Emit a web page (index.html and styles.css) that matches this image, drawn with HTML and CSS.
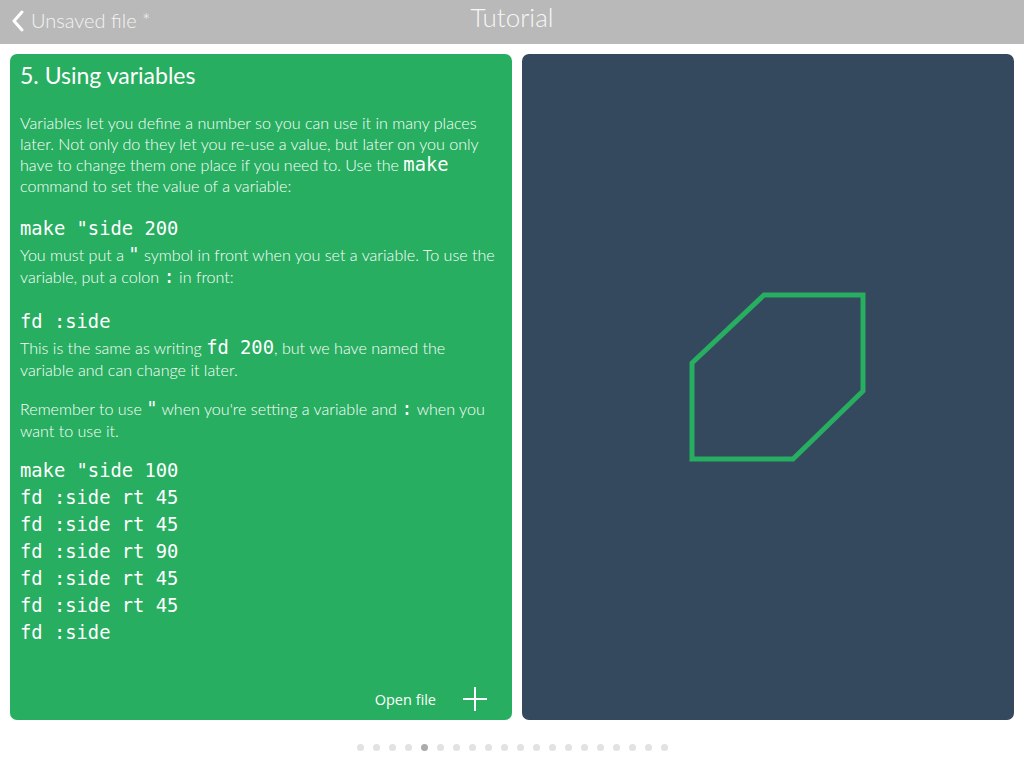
FILE: index.html
```html
<!DOCTYPE html>
<html>
<head>
<meta charset="utf-8">
<link rel="stylesheet" href="styles.css">
</head>
<body>
<header class="topbar">
  <a class="back">
    <svg class="chev" width="14" height="22" viewBox="0 0 14 22"><path d="M11 2 L3 11 L11 20" fill="none" stroke="#fff" stroke-width="3" stroke-linecap="round" stroke-linejoin="round"/></svg>
    <span>Unsaved file *</span>
  </a>
  <div class="title">Tutorial</div>
</header>
<main class="main">
  <section class="card lesson">
    <h1>5. Using variables</h1>
    <p class="p1">Variables let you define a number so you can use it in many places later. Not only do they let you re-use a value, but later on you only have to change them one place if you need to. Use the <code>make</code> command to set the value of a variable:</p>
    <pre class="code first">make "side 200</pre>
    <p class="desc">You must put a <code>"</code> symbol in front when you set a variable. To use the variable, put a colon <code>:</code> in front:</p>
    <pre class="code second">fd :side</pre>
    <p class="desc">This is the same as writing <code>fd 200</code>, but we have named the variable and can change it later.</p>
    <p class="p2">Remember to use <code>"</code> when you're setting a variable and <code>:</code> when you want to use it.</p>
    <pre class="code block">make "side 100
fd :side rt 45
fd :side rt 45
fd :side rt 90
fd :side rt 45
fd :side rt 45
fd :side</pre>
    <div class="spacer"></div>
    <div class="actions">
      <span class="open">Open file</span>
      <svg class="plus" width="26" height="26" viewBox="0 0 26 26"><path d="M13 1 V25 M1 13 H25" stroke="#fff" stroke-width="2"/></svg>
    </div>
  </section>
  <section class="card canvas">
    <svg class="drawing" width="492" height="666" viewBox="0 0 492 666">
      <polygon points="170,309 242,241 341,241 341,337 271,405 170,405" fill="none" stroke="#27ae60" stroke-width="5" stroke-linejoin="miter"/>
    </svg>
  </section>
</main>
<nav class="dots">
  <span class="dot"></span><span class="dot"></span><span class="dot"></span><span class="dot"></span><span class="dot active"></span><span class="dot"></span><span class="dot"></span><span class="dot"></span><span class="dot"></span><span class="dot"></span><span class="dot"></span><span class="dot"></span><span class="dot"></span><span class="dot"></span><span class="dot"></span><span class="dot"></span><span class="dot"></span><span class="dot"></span><span class="dot"></span><span class="dot"></span>
</nav>
</body>
</html>
```
FILE: styles.css
```css
html, body {
  margin: 0;
  padding: 0;
  background: #ffffff;
  font-family: "Lato", "Open Sans", sans-serif;
  width: 1024px;
  height: 768px;
  overflow: hidden;
}

.topbar {
  height: 44px;
  background: #b9b9b9;
  display: grid;
  grid-template-columns: 1fr auto 1fr;
  align-items: center;
  color: #fff;
}

.back {
  display: flex;
  align-items: center;
  gap: 6px;
  padding-left: 11px;
  padding-bottom: 5px;
  font-weight: 300;
  font-size: 20px;
  color: #f4f4f4;
}

.chev {
  display: block;
  margin-top: 2px;
}

.title {
  font-weight: 300;
  font-size: 26px;
  color: #f7f7f7;
  padding-bottom: 10px;
}

.main {
  display: grid;
  grid-template-columns: 502px 1fr;
  gap: 10px;
  padding: 10px;
  height: 666px;
}

.card {
  border-radius: 7px;
  overflow: hidden;
}

.lesson {
  background: #27ae60;
  color: #fff;
  padding: 7px 10px 0 10px;
  display: flex;
  flex-direction: column;
}

.lesson h1 {
  margin: 0;
  font-weight: 400;
  font-size: 23px;
  line-height: 28px;
}

.lesson p {
  margin: 0;
  font-weight: 300;
  font-size: 16.1px;
  line-height: 21px;
}

.lesson code {
  font-family: "DejaVu Sans Mono", monospace;
  font-size: 18.8px;
  line-height: 0;
}

.p1 {
  margin-top: 23px !important;
}

.code {
  margin: 0;
  font-family: "DejaVu Sans Mono", monospace;
  font-size: 18.8px;
  line-height: 27px;
  white-space: pre;
}

.code.first {
  margin-top: 18.5px;
}

.code.second {
  margin-top: 20px;
}

.lesson .desc {
  margin-top: 2px;
  line-height: 22px;
}

.lesson .p2 {
  margin-top: 17px;
  line-height: 22px;
}

.code.block {
  margin-top: 15px;
}

.spacer {
  flex: 1;
}

.actions {
  display: flex;
  align-items: center;
  justify-content: flex-end;
  gap: 26px;
  height: 40px;
  padding-right: 14px;
  padding-bottom: 1px;
}

.open {
  font-family: "Open Sans", sans-serif;
  font-size: 14.5px;
  color: #fff;
}

.plus {
  display: block;
}

.canvas {
  background: #34495e;
}

.drawing {
  display: block;
}

.dots {
  display: flex;
  justify-content: center;
  gap: 9px;
  padding-top: 14px;
  padding-left: 1px;
}

.dot {
  width: 7px;
  height: 7px;
  border-radius: 50%;
  background: #e2e2e2;
}

.dot.active {
  background: #ababab;
}
```
